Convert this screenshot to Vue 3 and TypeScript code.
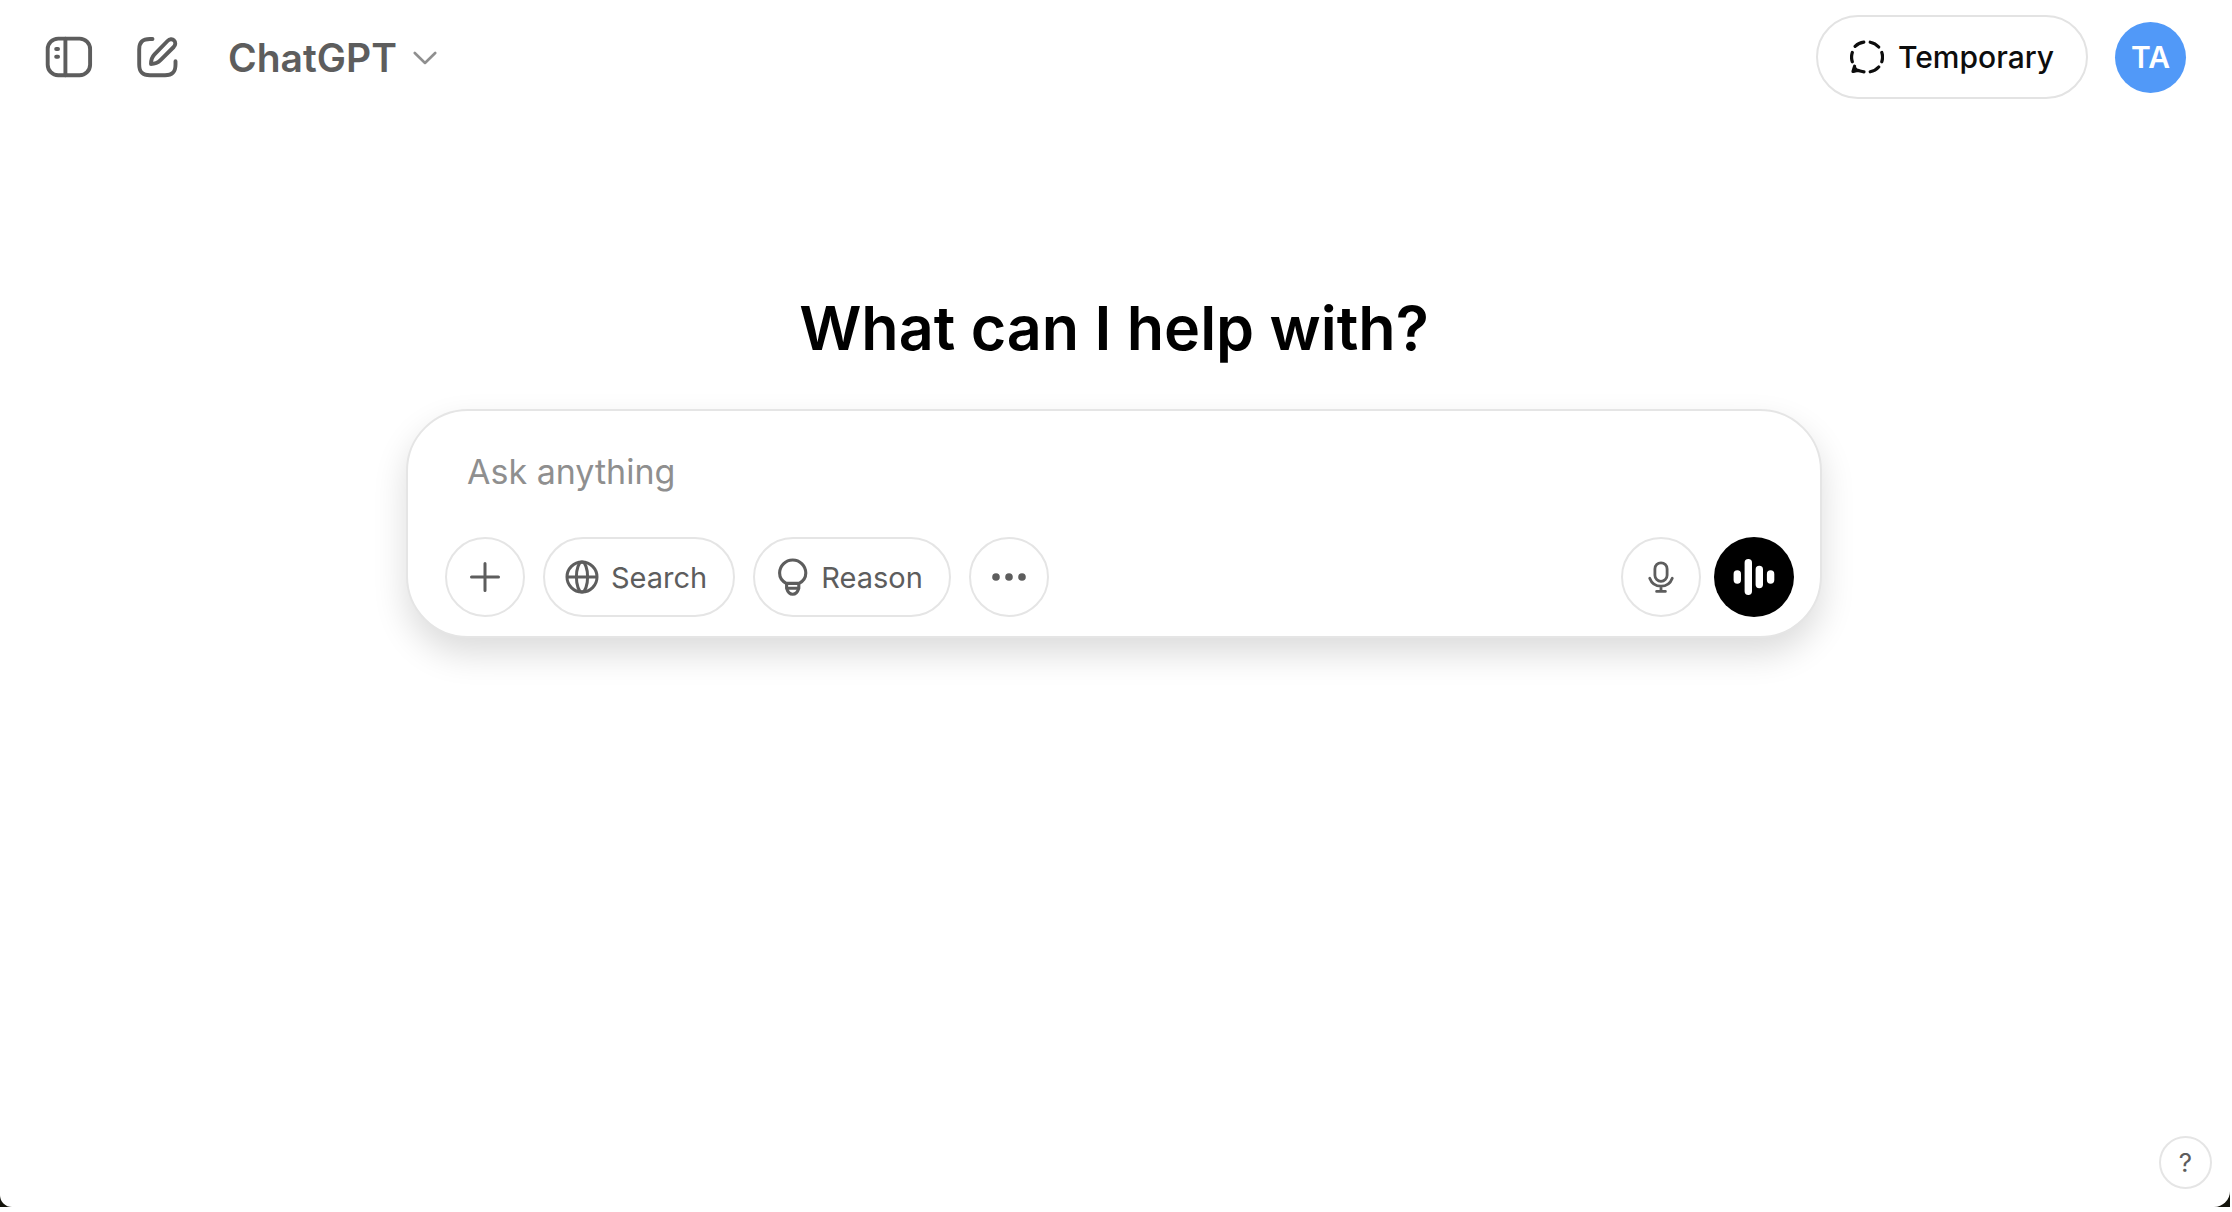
<script setup lang="ts">
import { ref } from 'vue'

const prompt = ref<string>('')
const userInitials = 'TA'
</script>

<template>
  <div class="backdrop">
    <div class="window">
      <header class="topbar">
        <div class="group">
          <button class="icon-button" type="button" aria-label="Open sidebar">
            <svg width="48" height="48" viewBox="0 0 48 48" fill="none" stroke="currentColor" stroke-width="3.9" stroke-linecap="round">
              <rect x="2.7" y="5.6" width="42.4" height="36.6" rx="10.5" />
              <path d="M20.4 5.6V42.2" />
              <path d="M11.2 16.1H13M11.2 23.7H13" stroke-width="4" />
            </svg>
          </button>
          <button class="icon-button" type="button" aria-label="New chat">
            <svg width="48" height="48" viewBox="0 0 48 48" fill="none" stroke="currentColor" stroke-width="3.9" stroke-linecap="round" stroke-linejoin="round">
              <path d="M18.5 6H16C8.5 6 5.2 9.2 5.2 16.4V31.4C5.2 39 8.4 42.2 16 42.2H31C38.4 42.2 41.5 39 41.5 31.4V28.2" />
              <path d="M17 31C17 26.9 17.8 24.2 20.5 21.4L33.5 8C35.5 6 38.4 5.7 40 7.4C41.8 9.1 41.7 11.9 39.7 14L26.5 27.2C23.8 29.9 21 31 17 31Z" />
            </svg>
          </button>
          <button class="model-button" type="button">
            <span>ChatGPT</span>
            <svg width="24" height="16" viewBox="0 0 24 16" fill="none" stroke="#8f8f8f" stroke-width="2.6" stroke-linecap="round" stroke-linejoin="round">
              <path d="M1.8 3L12 13L22.2 3" />
            </svg>
          </button>
        </div>
        <div class="group">
          <button class="temporary-button" type="button">
            <svg width="34" height="34" viewBox="0 0 34 34" fill="none" stroke="currentColor" stroke-width="3.2" stroke-linecap="round">
              <path d="M5.1 6.3A15.3 15.3 0 0 1 13.8 2.2M20.2 2.2A15.3 15.3 0 0 1 28.7 7M31.8 12.4A15.3 15.3 0 0 1 31.8 21.8M28.7 27A15.3 15.3 0 0 1 20.2 31.8M2.3 21.8A15.3 15.3 0 0 1 2.3 12.4" />
              <path d="M4.6 26.2L3 31.4L7.8 30.4C9.8 30.8 11.6 31.5 14 31.8" stroke-linejoin="round" />
              <path d="M4.6 27L3 31.4L7.6 30.4Z" fill="currentColor" stroke-width="2" stroke-linejoin="round" />
            </svg>
            <span>Temporary</span>
          </button>
          <button class="avatar" type="button" aria-label="Open profile menu">{{ userInitials }}</button>
        </div>
      </header>

      <main class="main">
        <h1 class="title">What can I help with?</h1>
        <form class="composer" @submit.prevent>
          <input v-model="prompt" class="prompt" type="text" placeholder="Ask anything" aria-label="Ask anything" />
          <div class="actions">
            <div class="tools">
              <button class="tool round" type="button" aria-label="Add files">
                <svg width="32" height="32" viewBox="0 0 32 32" fill="none" stroke="currentColor" stroke-width="3" stroke-linecap="round">
                  <path d="M16 2.5V29.5M2.5 16H29.5" />
                </svg>
              </button>
              <button class="tool" type="button">
                <svg width="34" height="34" viewBox="0 0 34 34" fill="none" stroke="currentColor" stroke-width="3">
                  <circle cx="17" cy="17" r="15" />
                  <ellipse cx="17" cy="17" rx="5.6" ry="15" />
                  <path d="M2 17H32" />
                </svg>
                <span>Search</span>
              </button>
              <button class="tool" type="button">
                <svg width="34" height="38" viewBox="-1 0 34 38" fill="none" stroke="currentColor" stroke-width="3.1" stroke-linejoin="round">
                  <path d="M10.6 25.6C6.4 23.6 3.6 19.4 3.6 15.1A13.1 13.1 0 0 1 29.8 15.1C29.8 19.4 27 23.6 22.8 25.6V30.2C21.6 34.2 19.6 36.2 16.7 36.2C13.8 36.2 11.8 34.2 10.6 30.2Z" />
                  <path d="M10.6 25.4H22.8M10.6 30.2H22.8" />
                </svg>
                <span>Reason</span>
              </button>
              <button class="tool round" type="button" aria-label="More tools">
                <svg width="36" height="10" viewBox="0 0 36 10" fill="currentColor">
                  <circle cx="5" cy="5" r="3.8" />
                  <circle cx="18" cy="5" r="3.8" />
                  <circle cx="31" cy="5" r="3.8" />
                </svg>
              </button>
            </div>
            <div class="voice-tools">
              <button class="tool round" type="button" aria-label="Dictate">
                <svg width="28" height="34" viewBox="0 0 28 34" fill="none" stroke="currentColor" stroke-width="2.8" stroke-linecap="round">
                  <rect x="7.9" y="2.8" width="12.2" height="18.6" rx="6.1" />
                  <path d="M2.7 18.2C4.6 23.2 8.9 26.2 14 26.2C19.1 26.2 23.4 23.2 25.3 18.2M14 26.4V31M9.6 31.4H18.4" />
                </svg>
              </button>
              <button class="voice" type="button" aria-label="Use voice mode">
                <svg width="44" height="38" viewBox="0 0 44 38" fill="none" stroke="currentColor" stroke-width="7.4" stroke-linecap="round">
                  <path d="M5.3 16V22M16.3 4.8V33.2M27.3 11.5V26.5M38.6 16V22" />
                </svg>
              </button>
            </div>
          </div>
        </form>
      </main>

      <footer class="footer">
        <button class="help" type="button" aria-label="Help">?</button>
      </footer>
    </div>
  </div>
</template>

<style>
body {
  background: #fff;
}
</style>

<style scoped>
.backdrop {
  box-sizing: border-box;
  min-height: 100vh;
  display: flex;
  padding: 0 2px 5px 0;
  background: linear-gradient(#14140c, #14140c) content-box;
  font-family: Inter, "Liberation Sans", sans-serif;
  color: #0d0d0d;
}

.window {
  flex: 1;
  display: flex;
  flex-direction: column;
  background: #fff;
  border-radius: 0 0 16px 12px;
}

button {
  display: flex;
  align-items: center;
  justify-content: center;
  flex-shrink: 0;
  margin: 0;
  padding: 0;
  border: 0;
  background: none;
  font: inherit;
  color: inherit;
  cursor: pointer;
}

svg {
  display: block;
  flex-shrink: 0;
}

.topbar {
  display: flex;
  align-items: center;
  justify-content: space-between;
  height: 84px;
  padding: 15px 44px 0 45px;
}

.group {
  display: flex;
  align-items: center;
}

.icon-button {
  width: 48px;
  height: 48px;
  margin-right: 41px;
  color: #5d5d5d;
}

.model-button {
  gap: 16px;
  padding: 2px 0 0 5px;
  font-size: 39px;
  font-weight: 600;
  line-height: 48px;
  color: #5d5d5d;
}

.temporary-button {
  box-sizing: border-box;
  height: 84px;
  gap: 14px;
  margin-right: 27px;
  padding: 0 32px;
  border: 2px solid #e3e3e3;
  border-radius: 42px;
  font-size: 30px;
  font-weight: 500;
}

.avatar {
  width: 71px;
  height: 71px;
  border-radius: 50%;
  background: #5199f8;
  font-size: 30px;
  font-weight: 600;
  color: #fff;
}

.main {
  flex: 1;
  display: flex;
  flex-direction: column;
  align-items: center;
  padding: 193px 42px 0 40px;
}

.title {
  margin: 0;
  font-size: 61px;
  font-weight: 600;
  line-height: 72px;
  color: #000;
}

.composer {
  box-sizing: border-box;
  width: 100%;
  max-width: 1416px;
  margin-top: 45px;
  padding: 32px 26px 19px 37px;
  border: 2px solid #e5e5e5;
  border-radius: 62px;
  background: #fff;
  box-shadow: 0 16px 34px rgba(0, 0, 0, 0.14);
}

.prompt {
  box-sizing: border-box;
  display: block;
  width: 100%;
  height: 56px;
  padding: 0 22px;
  border: 0;
  outline: 0;
  background: none;
  font: inherit;
  font-size: 34px;
  color: #0d0d0d;
}

.prompt::placeholder {
  color: #8f8f8f;
  opacity: 1;
}

.actions {
  display: flex;
  justify-content: space-between;
  margin-top: 38px;
}

.tools {
  display: flex;
  gap: 18px;
}

.voice-tools {
  display: flex;
  gap: 13px;
}

.tool {
  box-sizing: border-box;
  height: 80px;
  gap: 12px;
  padding: 0 26px 0 20px;
  border: 2px solid #e5e5e5;
  border-radius: 40px;
  font-size: 29px;
  color: #5d5d5d;
}

.round {
  width: 80px;
  padding: 0;
}

.voice {
  width: 80px;
  height: 80px;
  border-radius: 50%;
  background: #000;
  color: #fff;
}

.footer {
  display: flex;
  justify-content: flex-end;
  padding: 0 18px;
}

.help {
  box-sizing: border-box;
  width: 53px;
  height: 53px;
  margin-bottom: 18px;
  border: 2px solid #e5e5e5;
  border-radius: 50%;
  font-size: 26px;
  color: #5d5d5d;
}
</style>
